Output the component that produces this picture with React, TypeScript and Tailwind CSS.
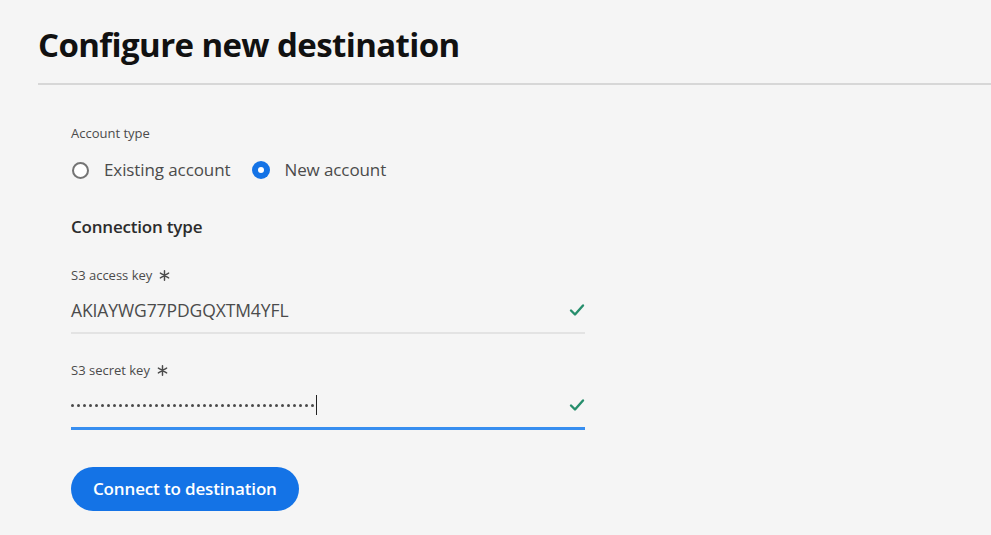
import React from 'react'

const Check: React.FC = () => (
  <svg width="16" height="14" viewBox="0 0 16 14" fill="none">
    <path d="M2 7.5L6 11.5L14 2.5" stroke="#268e6c" strokeWidth="2.4" strokeLinecap="round" strokeLinejoin="round" />
  </svg>
)

const Asterisk: React.FC = () => (
  <svg width="11" height="11" viewBox="0 0 12 12" className="ml-[7px]">
    <path d="M6 0.8V11.2M1.5 3.4L10.5 8.6M1.5 8.6L10.5 3.4" stroke="#4b4b4b" strokeWidth="1.6" strokeLinecap="round" />
  </svg>
)

const dots = Array.from({ length: 41 })

const App: React.FC = () => {
  return (
    <div
      className="w-[991px] h-[535px] bg-[#f5f5f5] overflow-hidden text-[#4b4b4b]"
      style={{ fontFamily: "'Open Sans', 'Noto Sans', sans-serif" }}
    >
      {/* Header */}
      <div className="pl-[38px] pt-[22px]">
        <h1 className="text-[33px] leading-[46px] font-bold text-[#111] tracking-[-0.6px]">
          Configure new destination
        </h1>
        <div className="mt-[15px] h-[2px] bg-[#d7d7d7]" />
      </div>

      {/* Form */}
      <div className="pl-[71px] pt-[39px] w-[585px]">
        <div className="text-[13px] leading-[18px]">Account type</div>

        <div className="mt-[16px] flex items-center h-[24px] text-[17px] tracking-[-0.1px]">
          <span className="w-[17px] h-[17px] rounded-full border-2 border-[#747474] bg-white ml-[1px]" />
          <span className="ml-[15px]">Existing account</span>
          <span className="ml-[22px] w-[18px] h-[18px] rounded-full bg-[#1473e6] flex items-center justify-center">
            <span className="w-[6px] h-[6px] rounded-full bg-white" />
          </span>
          <span className="ml-[14px]">New account</span>
        </div>

        <div className="mt-[34px] text-[17px] leading-[22px] font-semibold text-[#2c2c2c] tracking-[-0.2px]">
          Connection type
        </div>

        {/* Access key */}
        <div className="mt-[28px] flex items-center text-[13px] leading-[18px]">
          S3 access key
          <Asterisk />
        </div>
        <div className="mt-[14px] pb-[10px] flex items-center justify-between border-b-2 border-[#e3e3e3]">
          <span className="text-[17.5px] leading-[24px] tracking-[-0.1px]">AKIAYWG77PDGQXTM4YFL</span>
          <Check />
        </div>

        {/* Secret key */}
        <div className="mt-[27px] flex items-center text-[13px] leading-[18px]">
          S3 secret key
          <Asterisk />
        </div>
        <div className="mt-[14px] pb-[10px] h-[37px] flex items-center justify-between border-b-[3px] border-[#378ef0]">
          <span className="flex items-center h-[24px]">
            <span className="flex items-center gap-[3px]">
              {dots.map((_, i) => (
                <span key={i} className="w-[3px] h-[3px] rounded-full bg-[#4a4a4a]" />
              ))}
            </span>
            <span className="ml-[2px] w-[1px] h-[20px] bg-[#222]" />
          </span>
          <Check />
        </div>

        <button className="mt-[37px] h-[44px] px-[22px] rounded-full bg-[#1473e6] text-white text-[17px] font-semibold tracking-[-0.15px]">
          Connect to destination
        </button>
      </div>
    </div>
  )
}

export default App
